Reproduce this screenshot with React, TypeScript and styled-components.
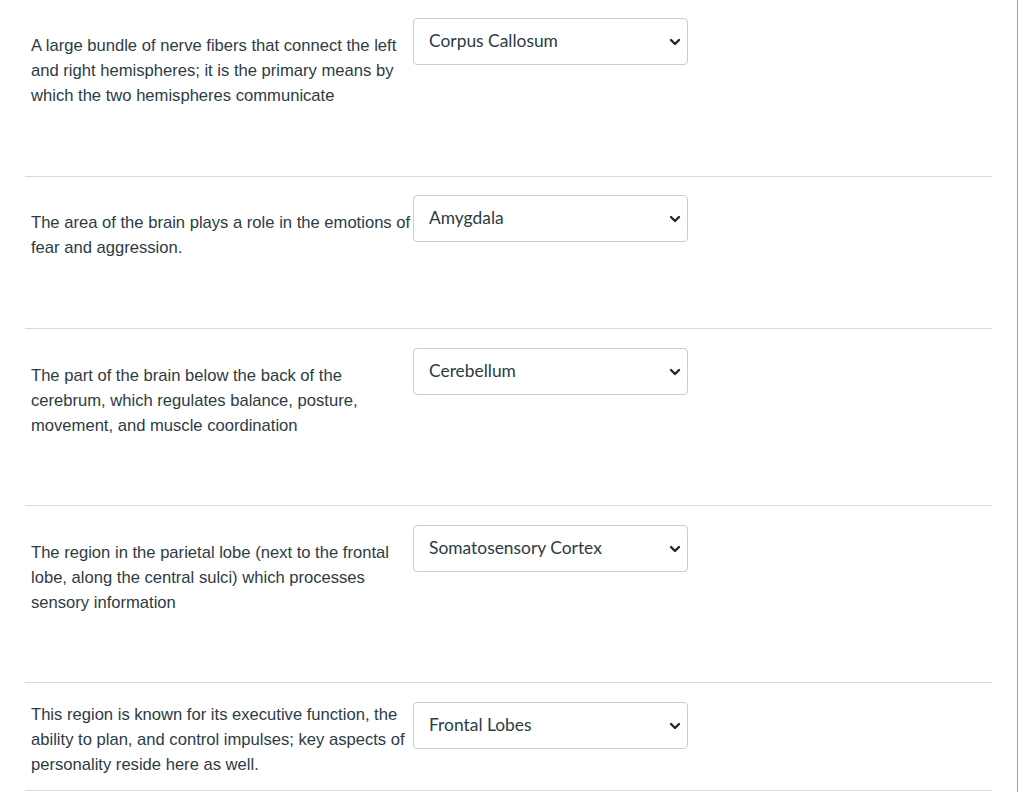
import styled, { createGlobalStyle } from "styled-components";
import { ChevronDown } from "lucide-react";

const GlobalStyle = createGlobalStyle`
  html, body {
    margin: 0;
    padding: 0;
    background: #fff;
  }
  body {
    font-family: "Liberation Sans", Arial, sans-serif;
    color: #2d3b45;
  }
`;

const Page = styled.div`
  width: 1018px;
  min-height: 792px;
  border-right: 1px solid #a3a3a3;
  box-sizing: border-box;
`;

const List = styled.div`
  margin-left: 25px;
  width: 967px;
`;

const Row = styled.div<{ $top: number; $bottom: number }>`
  display: flex;
  align-items: flex-start;
  padding: ${(p) => p.$top}px 0 ${(p) => p.$bottom}px 6px;
  border-bottom: 1px solid #d9d9d9;
`;

const Prompt = styled.div<{ $offset: number }>`
  width: 382px;
  flex: none;
  margin-top: ${(p) => p.$offset}px;
  margin-bottom: -1px;
  font-size: 16.6px;
  line-height: 25px;
  color: #2d3b45;
`;

const SelectWrap = styled.div`
  position: relative;
  width: 275px;
  height: 47px;
  flex: none;
`;

const Select = styled.select`
  appearance: none;
  width: 100%;
  height: 100%;
  box-sizing: border-box;
  border: 1px solid #c7cdd1;
  border-radius: 4px;
  background: #fff;
  padding: 0 36px 2px 15px;
  font-family: Lato, "Liberation Sans", sans-serif;
  font-size: 17.4px;
  font-weight: 400;
  color: #2d3b45;
  outline: none;
`;

const Caret = styled.span`
  position: absolute;
  right: 5px;
  top: 50%;
  transform: translateY(-50%);
  display: flex;
  pointer-events: none;
  color: #1f2a31;
`;

const options = [
  "Corpus Callosum",
  "Amygdala",
  "Cerebellum",
  "Somatosensory Cortex",
  "Frontal Lobes",
];

const items = [
  {
    text: "A large bundle of nerve fibers that connect the left and right hemispheres; it is the primary means by which the two hemispheres communicate",
    answer: "Corpus Callosum",
    top: 18,
    offset: 15,
    bottom: 69,
  },
  {
    text: "The area of the brain plays a role in the emotions of fear and aggression.",
    answer: "Amygdala",
    top: 18,
    offset: 15,
    bottom: 69,
  },
  {
    text: "The part of the brain below the back of the cerebrum, which regulates balance, posture, movement, and muscle coordination",
    answer: "Cerebellum",
    top: 19,
    offset: 15,
    bottom: 68,
  },
  {
    text: "The region in the parietal lobe (next to the frontal lobe, along the central sulci) which processes sensory information",
    answer: "Somatosensory Cortex",
    top: 19,
    offset: 15,
    bottom: 68,
  },
  {
    text: "This region is known for its executive function, the ability to plan, and control impulses; key aspects of personality reside here as well.",
    answer: "Frontal Lobes",
    top: 19,
    offset: 0,
    bottom: 14,
  },
];

export default function App() {
  return (
    <Page>
      <GlobalStyle />
      <List>
        {items.map((item) => (
          <Row key={item.answer} $top={item.top} $bottom={item.bottom}>
            <Prompt $offset={item.offset}>{item.text}</Prompt>
            <SelectWrap>
              <Select defaultValue={item.answer}>
                {options.map((o) => (
                  <option key={o}>{o}</option>
                ))}
              </Select>
              <Caret>
                <ChevronDown size={16} strokeWidth={3.6} />
              </Caret>
            </SelectWrap>
          </Row>
        ))}
      </List>
    </Page>
  );
}
